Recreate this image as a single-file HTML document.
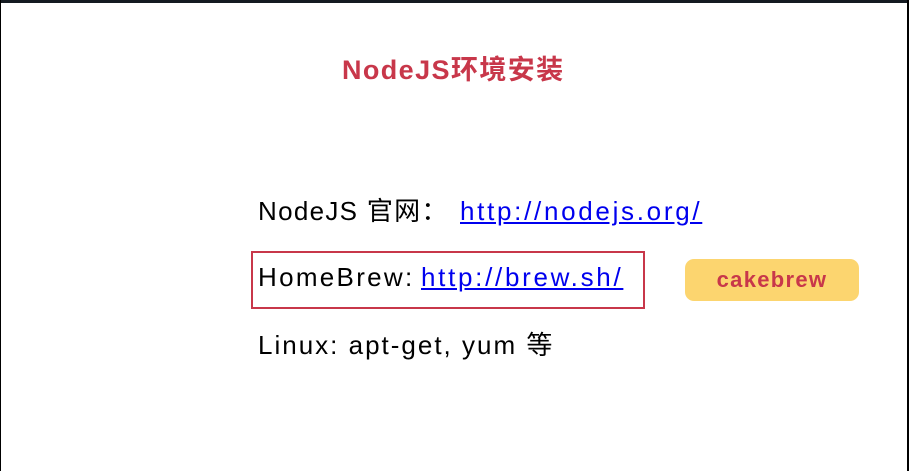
<!DOCTYPE html>
<html><head><meta charset="utf-8"><style>
body{margin:0;width:909px;height:471px;background:#fff;position:relative;overflow:hidden;font-family:"Liberation Sans","Noto Sans CJK SC",sans-serif}
.a{position:absolute;white-space:nowrap}
.t{font-size:26px;color:#000;line-height:30px}
a{color:#0000ee;text-decoration:underline}
</style></head><body>
<div class="a" style="left:0;top:0;width:909px;height:3px;background:#141a21"></div>
<div class="a" style="left:0;top:0;width:1px;height:471px;background:#000"></div>
<div class="a" style="left:907px;top:0;width:2px;height:471px;background:#000"></div>
<div class="a" style="left:342px;top:54px;font-size:27px;font-weight:bold;color:#c8374a;line-height:32px;letter-spacing:1.4px">NodeJS环境安装</div>
<div class="a t" style="left:258px;top:196px;letter-spacing:1.3px">NodeJS 官网：</div>
<div class="a t" style="left:460px;top:196px;letter-spacing:2.7px"><a>http://nodejs.org/</a></div>
<div class="a" style="left:251px;top:251px;width:394px;height:58px;border:2px solid #c8374a;box-sizing:border-box"></div>
<div class="a t" style="left:258px;top:262px;letter-spacing:2.3px">HomeBrew:</div>
<div class="a t" style="left:421px;top:262px;letter-spacing:2.7px"><a>http://brew.sh/</a></div>
<div class="a t" style="left:258px;top:330px;letter-spacing:2.0px">Linux: apt-get, yum 等</div>
<div class="a" style="left:685px;top:259px;width:174px;height:42px;background:#fcd56f;border-radius:9px;text-align:center;line-height:42px;font-size:22px;font-weight:bold;color:#c8374a;letter-spacing:1.3px">cakebrew</div>
</body></html>
